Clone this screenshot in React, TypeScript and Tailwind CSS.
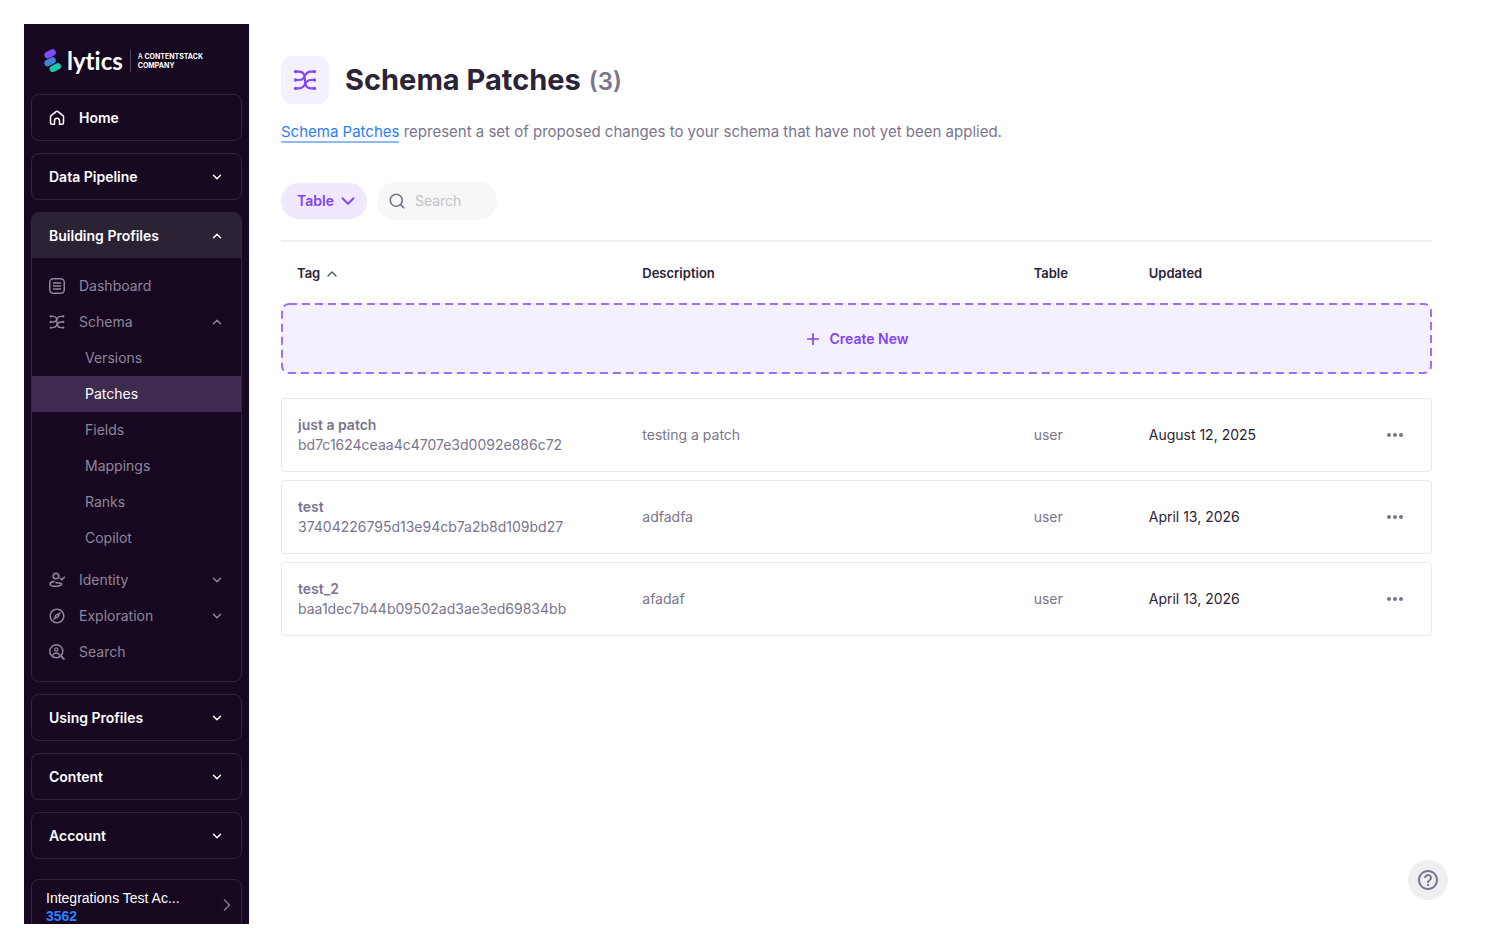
import React from 'react';
import { ChevronDown, ChevronRight, ChevronUp, Plus, Search } from 'lucide-react';
import { MdHelpOutline, MdMoreHoriz, MdOutlineExplore } from 'react-icons/md';

type IconProps = { className?: string };

const SchemaIcon: React.FC<IconProps> = ({ className }) => (
  <svg viewBox="0 0 24 24" fill="none" stroke="currentColor" strokeWidth="2.1" strokeLinecap="round" className={className}>
    <path d="M2.5 3.600H6c4.200 0 5.900 2.400 5.900 8.400s1.800 8.400 6.100 8.400h3.500" />
    <path d="M2.500 12H6c3.700 0 4.800-1.600 5.900-4.200S14.500 3.600 18 3.600h3.500" />
    <path d="M2.500 20.400H6c3.700 0 4.800-1.700 5.900-4.200S14.500 12 18 12h3.500" />
    <g fill="currentColor" stroke="none">
      <circle cx="2.600" cy="3.600" r="1.700" />
      <circle cx="2.600" cy="12" r="1.700" />
      <circle cx="2.600" cy="20.400" r="1.700" />
      <circle cx="21.400" cy="3.600" r="1.700" />
      <circle cx="21.400" cy="12" r="1.700" />
      <circle cx="21.400" cy="20.400" r="1.700" />
    </g>
  </svg>
);

const HomeIcon: React.FC<IconProps> = ({ className }) => (
  <svg viewBox="0 0 16 16" fill="none" stroke="currentColor" strokeWidth="1.5" strokeLinejoin="round" className={className}>
    <path d="M1.500 6.800c0-.5.200-.9.600-1.200L7 1.700c.6-.5 1.400-.5 2 0l4.900 3.900c.4.300.6.700.6 1.200v6c0 .9-.6 1.500-1.500 1.500h-2.500v-3.500a2.500 2.500 0 0 0-5 0v3.500H3c-.9 0-1.500-.6-1.500-1.500z" />
  </svg>
);

const DashboardIcon: React.FC<IconProps> = ({ className }) => (
  <svg viewBox="0 0 16 16" fill="none" stroke="currentColor" strokeWidth="1.500" className={className}>
    <rect x=".75" y=".75" width="14.500" height="14.500" rx="3.500" />
    <path d="M4 5h8M4 8h8M4 11h8" />
  </svg>
);

const IdentityIcon: React.FC<IconProps> = ({ className }) => (
  <svg viewBox="0 0 16 16" fill="none" stroke="currentColor" strokeWidth="1.600" strokeLinecap="round" strokeLinejoin="round" className={className}>
    <circle cx="7" cy="4" r="2.800" />
    <path d="M11.300 6.500l1.500 1.300 2.500-2.600" />
    <path d="M5 9.600c-2.500.2-3.900 1.100-3.900 2.300 0 1.500 2 2.300 5.900 2.300 3.600 0 5.500-.8 5.700-2.300-1.600-1.200-4.200-1.200-5.700-1.200" />
  </svg>
);

const UserSearchIcon: React.FC<IconProps> = ({ className }) => (
  <svg viewBox="0 0 16 16" fill="none" stroke="currentColor" strokeWidth="1.500" className={className}>
    <circle cx="7.300" cy="7.300" r="6.500" />
    <path d="M12 12l3.500 3.500" strokeWidth="1.800" />
    <circle cx="7.300" cy="5.500" r="1.600" strokeWidth="1.300" />
    <path d="M3.800 11.500c.6-1.800 1.900-2.500 3.500-2.500s2.900.7 3.500 2.500" />
  </svg>
);

const Logo: React.FC = () => (
  <a href="#" className="mx-[13px] flex h-[70px] items-center pt-1 text-white">
    <svg viewBox="0 0 18 24" className="mr-[5px] h-6 w-[18px]" strokeWidth="6.500" strokeLinecap="round">
      <path d="M3.600 6l5-2.500" stroke="#7d4dfa" />
      <path d="M3.600 14l5-2.500" stroke="#3f83d6" />
      <path d="M8.800 19.800l5-2.500" stroke="#1fc8a5" />
    </svg>
    <span className="font-[Lato] text-2xl leading-6 font-bold [font-variant-ligatures:none]">lytics</span>
    <span className="ml-[7px] border-l border-[#4b4158] py-[2px] pl-[7px] text-[7px] leading-[9px] font-bold">
      <span className="font-medium">A</span> CONTENTSTACK
      <br />
      COMPANY
    </span>
  </a>
);

type GroupProps = { label: string; open?: boolean; icon?: React.ReactNode; hasChevron?: boolean; children?: React.ReactNode };

const NavGroup: React.FC<GroupProps> = ({ label, open, icon, hasChevron = true, children }) => (
  <section className="overflow-hidden rounded-lg border border-[#2f253a]">
    <button className={`flex h-[45px] w-full items-center px-[17px] text-left text-sm font-semibold text-white ${open ? 'bg-[#2b2236]' : ''}`}>
      {icon}
      <span className="flex-1">{label}</span>
      {hasChevron && (open ? <ChevronUp size={14} strokeWidth={2.5} /> : <ChevronDown size={14} strokeWidth={2.5} />)}
    </button>
    {children}
  </section>
);

type ItemProps = { label: string; icon: React.ReactNode; chevron?: 'up' | 'down' };

const NavItem: React.FC<ItemProps> = ({ label, icon, chevron }) => (
  <a href="#" className="flex h-9 items-center px-[17px] text-sm text-[#8d8799]">
    {icon}
    <span className="ml-[14px] flex-1">{label}</span>
    {chevron === 'up' && <ChevronUp size={14} strokeWidth={2.5} />}
    {chevron === 'down' && <ChevronDown size={14} strokeWidth={2.5} />}
  </a>
);

const schemaPages = ['Versions', 'Patches', 'Fields', 'Mappings', 'Ranks', 'Copilot'];

const Sidebar: React.FC = () => (
  <aside className="w-[225px] shrink-0 overflow-hidden bg-[#170822] px-[7px]">
    <Logo />
    <nav className="flex flex-col gap-3">
      <NavGroup label="Home" icon={<HomeIcon className="mr-[14px] size-4" />} hasChevron={false} />
      <NavGroup label="Data Pipeline" />
      <NavGroup label="Building Profiles" open>
        <div className="pt-[10px] pb-[11px]">
          <NavItem label="Dashboard" icon={<DashboardIcon className="size-4" />} />
          <NavItem label="Schema" icon={<SchemaIcon className="size-4" />} chevron="up" />
          <ul className="mb-[6px]">
            {schemaPages.map((page) => (
              <li key={page}>
                <a
                  href="#"
                  className={`flex h-9 items-center pl-[53px] text-sm ${page === 'Patches' ? 'bg-[#3d2b50] text-white' : 'text-[#8d8799]'}`}
                >
                  {page}
                </a>
              </li>
            ))}
          </ul>
          <NavItem label="Identity" icon={<IdentityIcon className="size-4" />} chevron="down" />
          <NavItem label="Exploration" icon={<MdOutlineExplore className="-mx-px size-[18px]" />} chevron="down" />
          <NavItem label="Search" icon={<UserSearchIcon className="size-4" />} />
        </div>
      </NavGroup>
      <NavGroup label="Using Profiles" />
      <NavGroup label="Content" />
      <NavGroup label="Account" />
    </nav>
    <button className="mt-5 flex w-full items-start rounded-lg border border-[#2f253a] px-[14px] py-[9px] text-left font-['Liberation_Sans',sans-serif] text-sm leading-[18px] text-white">
      <span className="flex-1">
        Integrations Test Ac...
        <br />
        <span className="font-bold text-[#2f80ff]">3562</span>
      </span>
      <ChevronRight size={20} className="mt-[6px] -mr-[10px] text-[#7d788c]" />
    </button>
  </aside>
);

const patches = [
  { tag: 'just a patch', id: 'bd7c1624ceaa4c4707e3d0092e886c72', description: 'testing a patch', table: 'user', updated: 'August 12, 2025' },
  { tag: 'test', id: '37404226795d13e94cb7a2b8d109bd27', description: 'adfadfa', table: 'user', updated: 'April 13, 2026' },
  { tag: 'test_2', id: 'baa1dec7b44b09502ad3ae3ed69834bb', description: 'afadaf', table: 'user', updated: 'April 13, 2026' },
];

const PatchTable: React.FC = () => (
  <table className="w-full table-fixed border-separate border-spacing-x-0 border-spacing-y-2 text-sm">
    <thead>
      <tr className="h-[45px] text-left text-[13px] text-[#2b2338]">
        <th className="w-[30%] px-4 pt-[2px] font-semibold">
          <button className="flex items-center gap-1">
            Tag <ChevronUp size={16} className="text-[#475569]" />
          </button>
        </th>
        <th className="w-[34%] px-4 pt-[2px] font-semibold">Description</th>
        <th className="w-[10%] px-4 pt-[2px] font-semibold">Table</th>
        <th className="px-4 pt-[2px] font-semibold">Updated</th>
        <th className="w-[6%]" aria-label="Actions" />
      </tr>
    </thead>
    <tbody>
      <tr>
        <td colSpan={5} className="pb-4">
          <button className="relative flex h-[71px] w-full items-center justify-center gap-[7px] rounded-lg bg-[#f4f0fd] font-semibold text-[#8343f0]">
            <svg className="absolute inset-0 size-full" fill="none" stroke="#a06ff8" strokeWidth="2" strokeDasharray="8 5">
              <rect x="1" y="1" rx="7" className="h-[calc(100%-2px)] w-[calc(100%-2px)]" />
            </svg>
            <Plus size={18} strokeWidth={2.25} />
            Create New
          </button>
        </td>
      </tr>
      {patches.map((patch) => (
        <tr key={patch.id} className="h-[74px] text-[#7a758c]">
          <td className="rounded-l border-y border-l border-[#ebebee] px-4 leading-5">
            <div className="font-semibold">{patch.tag}</div>
            <div>{patch.id}</div>
          </td>
          <td className="border-y border-[#ebebee] px-4">{patch.description}</td>
          <td className="border-y border-[#ebebee] px-4">{patch.table}</td>
          <td className="border-y border-[#ebebee] px-4 text-[#2b2338]">{patch.updated}</td>
          <td className="rounded-r border-y border-r border-[#ebebee] pr-6">
            <button className="ml-auto block" aria-label="More actions">
              <MdMoreHoriz size={24} />
            </button>
          </td>
        </tr>
      ))}
    </tbody>
  </table>
);

const App: React.FC = () => {
  return (
    <div className="flex h-screen bg-white p-6 font-[Inter,sans-serif]">
      <Sidebar />
      <main className="min-w-0 flex-1 px-8 pt-8">
        <header className="flex items-center gap-4">
          <span className="flex size-12 items-center justify-center rounded-xl bg-[#f4f0fd] text-[#8343f0]">
            <SchemaIcon className="size-6" />
          </span>
          <h1 className="flex items-baseline gap-2 text-[29px] font-bold text-[#2b2338]">
            Schema Patches
            <span className="text-2xl font-semibold text-[#7a758c]">(3)</span>
          </h1>
        </header>
        <p className="mt-4 text-[15px] leading-6 text-[#7a758c]">
          <a href="#" className="border-b-2 border-[#8bbcff] text-[#2b80f5]">Schema Patches</a> represent a set of proposed changes to
          your schema that have not yet been applied.
        </p>

        {/* Filters */}
        <div className="mt-[38px] flex items-center gap-[10px] border-b-2 border-[#f0f0f1] pb-5 text-sm">
          <button className="flex h-9 items-center gap-[3px] rounded-full bg-[#f0e8fe] pr-2 pl-4 font-semibold text-[#8343f0]">
            Table <ChevronDown size={22} />
          </button>
          <label className="flex h-[38px] w-30 items-center gap-[9px] rounded-full bg-[#f7f7f7] px-[11px]">
            <Search size={18} className="shrink-0 text-[#7a758c]" strokeWidth={2.25} />
            <input type="text" aria-label="Search" placeholder="Search" className="w-full min-w-0 outline-none placeholder:text-[#c3c1cb]" />
          </label>
        </div>

        <PatchTable />
      </main>
      <button className="fixed right-10 bottom-12 flex size-10 items-center justify-center rounded-full bg-[#efeff1] text-[#7a758c]" aria-label="Help">
        <MdHelpOutline size={24} />
      </button>
    </div>
  );
};

export default App;
